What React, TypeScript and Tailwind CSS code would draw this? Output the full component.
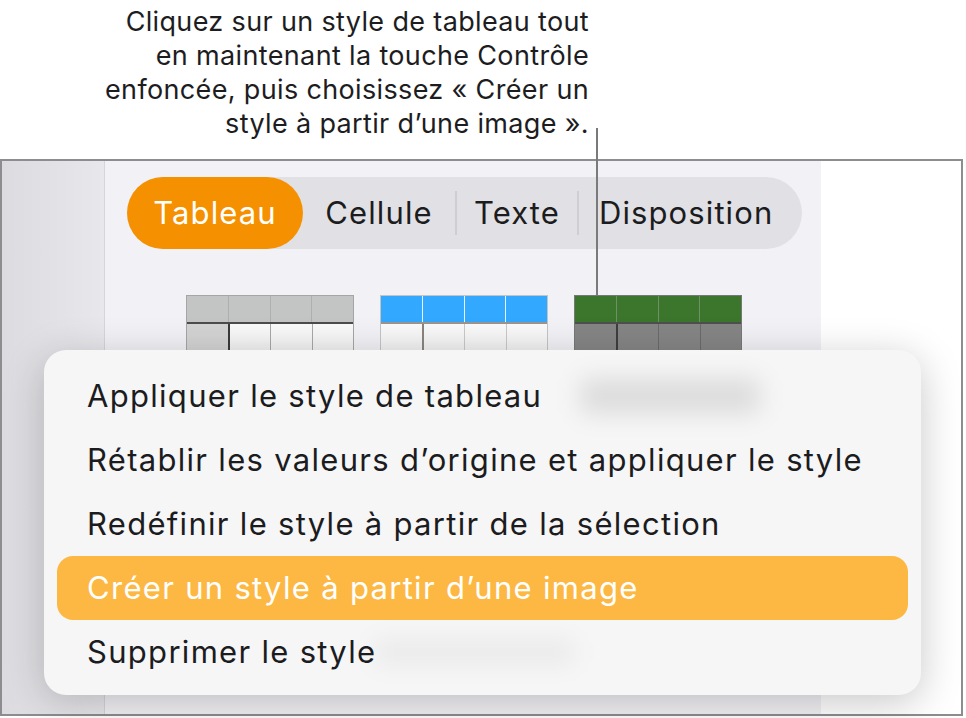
import React from "react"

const FONT = { fontFamily: "Inter, 'Noto Sans', sans-serif" }

const MENU_ITEMS = [
  "Appliquer le style de tableau",
  "Rétablir les valeurs d’origine et appliquer le style",
  "Redéfinir le style à partir de la sélection",
  "Créer un style à partir d’une image",
  "Supprimer le style",
]

type ThumbProps = {
  head: string
  headSep: string
  underline: string
  body: string
  firstBody: string
  bodySep: string
  firstSep: string
  frame: string
}

const Thumb = ({ head, headSep, underline, body, firstBody, bodySep, firstSep, frame }: ThumbProps) => (
  <div className={`flex w-[168px] flex-col border ${frame}`}>
    <div className={`flex h-[26px] ${head}`}>
      {[0, 1, 2, 3].map((i) => (
        <div key={i} className={`flex-1 ${i > 0 ? `border-l ${headSep}` : ""}`} />
      ))}
    </div>
    <div className={`h-[2px] ${underline}`} />
    <div className="flex h-[40px]">
      <div className={`flex-1 border-r-2 ${firstSep} ${firstBody}`} />
      <div className={`flex-1 ${body}`} />
      <div className={`flex-1 border-l ${bodySep} ${body}`} />
      <div className={`flex-1 border-l ${bodySep} ${body}`} />
    </div>
  </div>
)

export default function App() {
  return (
    <div className="relative h-[718px] w-[966px] overflow-hidden bg-white text-[#1c1c1e]" style={FONT}>
      {/* Caption */}
      <div className="flex h-[159px] justify-end pr-[377px] pt-[5px]">
        <p className="text-right text-[27px] leading-[34px] tracking-[0.35px] text-[#1d1d1f]">
          Cliquez sur un style de tableau tout
          <br />
          en maintenant la touche Contrôle
          <br />
          enfoncée, puis choisissez « Créer un
          <br />
          style à partir d’une image ».
        </p>
      </div>

      {/* Callout line */}
      <div className="absolute left-[596px] top-[128px] z-10 h-[167px] w-[2px] bg-[#7a7a7a]" />

      {/* Screenshot frame */}
      <div className="flex h-[557px] w-[963px] border-2 border-[#8d8d8f]">
        <div className="w-[103px] border-r border-[#d6d6da] bg-gradient-to-r from-[#dcdce0] to-[#e8e8ec]" />
        <div className="w-[716px] bg-[#f2f2f6] pl-[22px] pt-[16px]">
          {/* Segmented control */}
          <div className="flex h-[72px] w-[675px] items-center rounded-full bg-[#e1e1e5] text-[31px] tracking-[1.1px]">
            <div className="flex h-full w-[176px] items-center justify-center rounded-full bg-[#f59100] text-white">
              Tableau
            </div>
            <div className="flex w-[152px] justify-center">Cellule</div>
            <div className="h-[44px] w-[2px] bg-[#cfcfd3]" />
            <div className="flex w-[120px] justify-center">Texte</div>
            <div className="h-[44px] w-[2px] bg-[#cfcfd3]" />
            <div className="flex flex-1 justify-start pl-[20px]">Disposition</div>
          </div>

          {/* Table styles */}
          <div className="mt-[46px] flex gap-[26px] pl-[59px]">
            <Thumb
              head="bg-[#c3c5c4]"
              headSep="border-[#aeb0af]"
              underline="bg-[#4c4c4c]"
              body="bg-gradient-to-b from-[#fafafa] to-[#ececec]"
              firstBody="bg-[#d3d3d3]"
              bodySep="border-[#a8a8a8]"
              firstSep="border-[#3a3a3a]"
              frame="border-[#a5a5a5]"
            />
            <Thumb
              head="bg-[#33a8ff]"
              headSep="border-[#e8f4ff]"
              underline="bg-[#9c958f]"
              body="bg-gradient-to-b from-[#fafafa] to-[#ececec]"
              firstBody="bg-gradient-to-b from-[#fafafa] to-[#ececec]"
              bodySep="border-[#c8c8c8]"
              firstSep="border-[#8a837e]"
              frame="border-[#c4c4c4]"
            />
            <Thumb
              head="bg-[#3c762d]"
              headSep="border-[#6f8f66]"
              underline="bg-[#4f4f4f]"
              body="bg-[#858585]"
              firstBody="bg-[#858585]"
              bodySep="border-[#6a6a6a]"
              firstSep="border-[#3e3e3e]"
              frame="border-[#777777]"
            />
          </div>
        </div>
        <div className="flex-1 bg-white" />
      </div>

      {/* Context menu */}
      <div className="absolute left-[44px] top-[350px] h-[345px] w-[877px] overflow-hidden rounded-[22px] bg-[#f6f6f7] px-[13px] py-[14px] shadow-[0_8px_40px_rgba(0,0,0,0.22)]">
        <div className="pointer-events-none absolute left-[536px] top-[28px] h-[36px] w-[180px] rounded-md bg-black/10 blur-md" />
        <div className="pointer-events-none absolute left-[330px] top-[290px] h-[24px] w-[200px] rounded-md bg-black/5 blur-md" />
        <div className="relative flex flex-col text-[31px] tracking-[1.3px]">
          {MENU_ITEMS.map((label, i) => (
            <div
              key={label}
              className={`flex h-[64px] items-center rounded-[16px] pl-[30px] ${
                i === 3 ? "bg-[#fdb843] text-white" : "text-[#1c1c1e]"
              }`}
            >
              {label}
            </div>
          ))}
        </div>
      </div>
    </div>
  )
}
